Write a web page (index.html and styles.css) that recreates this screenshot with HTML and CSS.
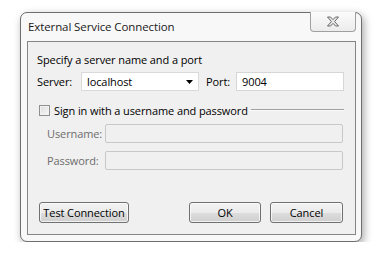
FILE: index.html
```html
<!DOCTYPE html>
<html>
<head>
<meta charset="utf-8">
<link rel="stylesheet" href="styles.css">
</head>
<body>
<div class="window">
  <div class="titlebar">
    <span class="title">External Service Connection</span>
    <div class="close">
      <svg width="14" height="11" viewBox="0 0 14 11">
        <path d="M1.5 1 L4.5 1 L7 3.6 L9.5 1 L12.5 1 L8.6 5.5 L12.5 10 L9.5 10 L7 7.4 L4.5 10 L1.5 10 L5.4 5.5 Z" fill="#e8e8e8" stroke="#6a6a6a" stroke-width="1" stroke-linejoin="round"/>
      </svg>
    </div>
  </div>
  <div class="panel">
    <div class="heading">Specify a server name and a port</div>
    <div class="row server-row">
      <span class="label server-label">Server:</span>
      <div class="combo">
        <span>localhost</span>
        <svg class="arrow" width="7" height="4" viewBox="0 0 7 4"><path d="M0 0 H7 L3.5 4 Z" fill="#000"/></svg>
      </div>
      <span class="label port-label">Port:</span>
      <div class="field port">9004</div>
    </div>
    <div class="row sign-row">
      <span class="checkbox"></span>
      <span class="sign-text">Sign in with a username and password</span>
      <span class="rule"></span>
    </div>
    <div class="row cred-row first">
      <span class="label disabled cred-label">Username:</span>
      <div class="field disabled-field"></div>
    </div>
    <div class="row cred-row">
      <span class="label disabled cred-label">Password:</span>
      <div class="field disabled-field"></div>
    </div>
    <div class="buttons">
      <button class="btn test">Test Connection</button>
      <span class="spacer"></span>
      <button class="btn ok">OK</button>
      <button class="btn cancel">Cancel</button>
    </div>
  </div>
</div>
</body>
</html>
```
FILE: styles.css
```css
html, body {
  margin: 0;
  padding: 0;
  background: #ffffff;
}
body {
  font-family: "Open Sans", "Noto Sans", sans-serif;
  font-size: 11px;
  letter-spacing: -0.1px;
  color: #000;
  padding: 12px 0 0 20px;
}
.window {
  box-sizing: border-box;
  width: 342px;
  height: 230px;
  border: 1px solid #6f6f6f;
  border-radius: 7px;
  background: #f8f8f8;
  box-shadow: 2px 3px 8px rgba(0,0,0,0.35);
  padding: 0 5px 6px 6px;
  display: flex;
  flex-direction: column;
}
.titlebar {
  height: 28px;
  display: flex;
  align-items: flex-start;
  justify-content: space-between;
}
.title {
  margin-top: 7px;
  margin-left: 1px;
  font-size: 11.5px;
  line-height: 14px;
  color: #1a1a1a;
  white-space: nowrap;
}
.close {
  box-sizing: border-box;
  width: 46px;
  height: 20px;
  margin-top: -1px;
  border: 1px solid #a0a0a0;
  border-top: none;
  border-radius: 0 0 4px 4px;
  background: linear-gradient(#fbfbfb, #ececec);
  display: flex;
  align-items: center;
  justify-content: center;
}
.panel {
  flex: 1;
  border: 1px solid #858585;
  background: #f0f0f0;
  padding: 10px 11px 0 9px;
  display: flex;
  flex-direction: column;
}
.heading {
  line-height: 16px;
  height: 16px;
  white-space: nowrap;
}
.row {
  display: flex;
  align-items: center;
  white-space: nowrap;
}
.server-row {
  margin-top: 4px;
  height: 19px;
}
.label {
  line-height: 16px;
  flex-shrink: 0;
}
.server-label {
  width: 44px;
}
.combo {
  box-sizing: border-box;
  width: 118px;
  height: 19px;
  border: 1px solid #dadada;
  background: #fff;
  display: flex;
  align-items: center;
  justify-content: space-between;
  padding: 0 5px 0 5px;
  flex-shrink: 0;
}
.port-label {
  margin-left: 7px;
  width: 30px;
}
.field {
  box-sizing: border-box;
  height: 19px;
  border: 1px solid #d6d6d6;
  background: #fff;
  padding-left: 5px;
  line-height: 17px;
}
.port {
  flex: 1;
}
.sign-row {
  margin-top: 11px;
  height: 16px;
  padding-left: 2px;
}
.checkbox {
  box-sizing: border-box;
  width: 11px;
  height: 11px;
  border: 1px solid #8e8f8f;
  background: linear-gradient(135deg, #dcdcdc, #f8f8f8);
  box-shadow: inset 0 0 0 1px #f2f2f2;
  flex-shrink: 0;
}
.sign-text {
  margin-left: 4px;
}
.rule {
  flex: 1;
  height: 1px;
  background: #a0a0a0;
  margin-left: 3px;
  border-bottom: 1px solid #fbfbfb;
}
.cred-row {
  margin-top: 8px;
  height: 19px;
  padding-left: 10px;
}
.cred-row.first {
  margin-top: 6px;
}
.cred-label {
  width: 58px;
}
.disabled {
  color: #6d6d6d;
}
.disabled-field {
  flex: 1;
  background: #f0f0f0;
  border: 1px solid #c8c8c8;
  border-radius: 2px;
  margin-right: 1px;
}
.buttons {
  margin-top: 32px;
  display: flex;
  padding-left: 2px;
}
.spacer {
  flex: 1;
}
.btn {
  box-sizing: border-box;
  height: 21px;
  border: 1px solid #707070;
  border-radius: 3px;
  background: linear-gradient(#f2f2f2 0%, #ebebeb 50%, #dddddd 51%, #cfcfcf 100%);
  font-family: inherit;
  font-size: 11px;
  letter-spacing: -0.1px;
  color: #000;
  padding: 0;
  white-space: nowrap;
  box-shadow: inset 0 0 0 1px rgba(255,255,255,0.7);
}
.test {
  width: 90px;
}
.ok {
  width: 72px;
}
.cancel {
  width: 73px;
  margin-left: 9px;
  margin-right: 1px;
}
```
